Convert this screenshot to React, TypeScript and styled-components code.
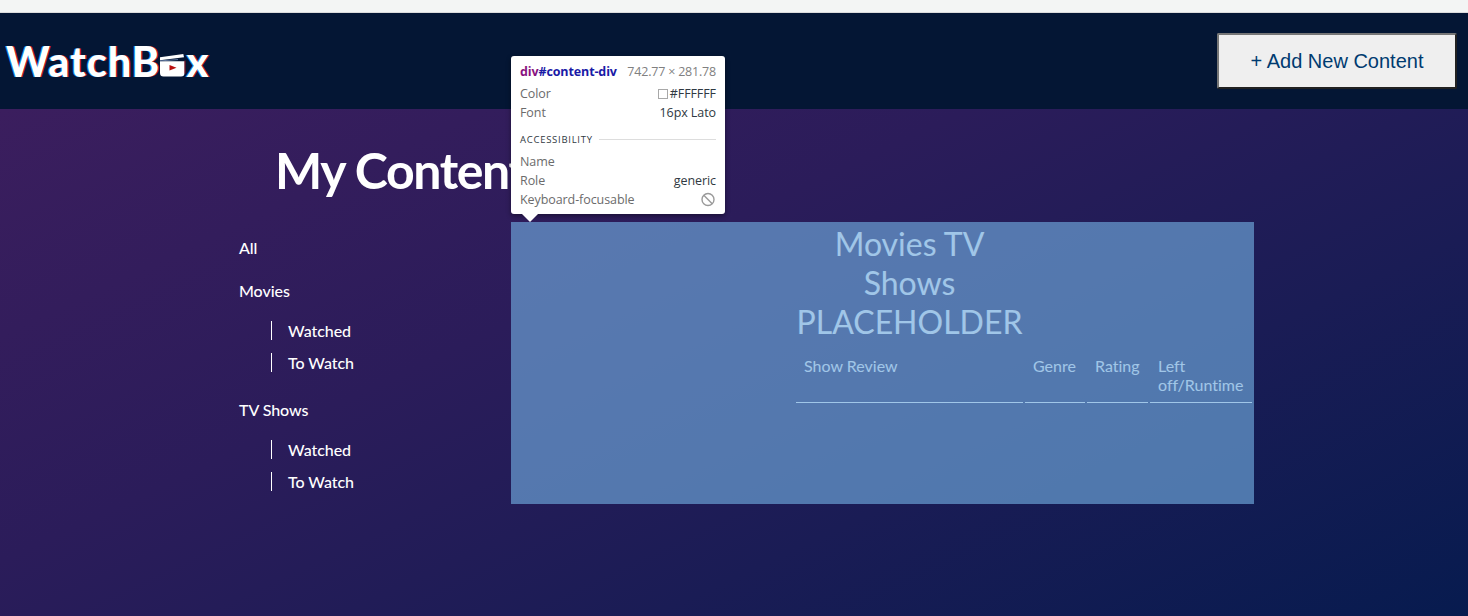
import React from 'react';
import styled, { createGlobalStyle } from 'styled-components';

const GlobalStyle = createGlobalStyle`
  * { box-sizing: border-box; }
  body { margin: 0; overflow: hidden; font-family: Lato, sans-serif; font-size: 16px; color: #fff; font-variant-ligatures: none; }
`;

const Page = styled.div`
  display: flex;
  flex-direction: column;
  height: 616px;
`;

const BrowserEdge = styled.div`
  flex: none;
  height: 13px;
  background: #f3f5f4;
  border-bottom: 1px solid #dcdcdc;
`;

const Header = styled.header`
  flex: none;
  display: flex;
  align-items: center;
  justify-content: space-between;
  height: 96px;
  padding: 0 11px 0 6px;
  background: #041634;
`;

const Logo = styled.div`
  display: flex;
  align-items: baseline;
  font: 900 41.5px/56px Lato, sans-serif;
  text-shadow: -1px 0 #168be0, 1px 0 #c4121c;
`;

const LogoText = styled.span<{ $spacing?: number }>`
  letter-spacing: ${(p) => p.$spacing ?? 0}px;
`;

const Clapper = styled.svg`
  width: 27px;
  height: 25px;
  margin: 0 0 -1px -1px;
`;

const AddButton = styled.button`
  width: 240px;
  height: 56px;
  margin-top: -1px;
  padding: 2px 0 0;
  border: 2px solid;
  border-color: #767676 #212121 #212121 #767676;
  border-radius: 2px;
  background: #efefef;
  color: #003b70;
  font: 20px 'Liberation Sans', Arial, sans-serif;
`;

const Main = styled.main`
  flex: 1;
  padding-left: 239px;
  background: linear-gradient(155deg, #3b1e5e 0%, #2b1c5a 38%, #1a1c55 68%, #071b4f 100%);
`;

const Title = styled.h1`
  margin: 0;
  height: 113px;
  padding: 31px 0 0 36px;
  font-size: 50px;
  line-height: 60px;
  font-weight: 700;
  letter-spacing: -1.4px;
`;

const Columns = styled.div`
  display: flex;
`;

const Sidebar = styled.nav`
  width: 272px;
  padding-top: 16px;
`;

const NavItem = styled.div<{ $gap?: number }>`
  height: 19px;
  line-height: 19px;
  font-weight: 500;
  letter-spacing: -0.06px;
  margin-bottom: ${(p) => p.$gap ?? 0}px;
`;

const SubItem = styled(NavItem)`
  margin-left: 32px;
  padding-left: 16px;
  border-left: 1px solid #fff;
`;

const ContentBox = styled.section`
  position: relative;
  width: 743px;
  height: 282px;
  padding-left: 283px;
`;

const Highlight = styled.div`
  position: absolute;
  inset: 0;
  background: rgba(111, 168, 220, 0.66);
`;

const ReviewTable = styled.table`
  width: 460px;
  table-layout: fixed;
  border-spacing: 2px;
  line-height: 19px;

  caption {
    width: 227px;
    margin-left: 2px;
    padding: 2px 0 3px;
    font-size: 32px;
    line-height: 39px;
  }

  th {
    height: 57px;
    padding: 10px 8px 7px;
    border-bottom: 1px solid #fff;
    text-align: left;
    vertical-align: top;
    font-weight: 400;
  }
`;

const Tooltip = styled.aside`
  position: absolute;
  left: 0;
  top: -166px;
  width: 214px;
  height: 158px;
  padding: 6px 9px 0;
  border-radius: 3px;
  background: #fff;
  box-shadow: 0 2px 5px rgba(0, 0, 0, 0.4);
  color: #303942;
  font: 12.5px/19px 'Open Sans', sans-serif;

  &::after {
    content: '';
    position: absolute;
    left: 11px;
    top: 158px;
    border: solid transparent;
    border-width: 8px 8px 0;
    border-top-color: #fff;
  }
`;

const TipRow = styled.div<{ $tall?: boolean }>`
  display: flex;
  align-items: center;
  justify-content: space-between;
  height: ${(p) => (p.$tall ? 22 : 19)}px;
  padding-bottom: ${(p) => (p.$tall ? 4 : 0)}px;
  white-space: nowrap;
`;

const TipText = styled.span<{ $color?: string; $spacing?: number; $bold?: boolean }>`
  display: inline-flex;
  align-items: center;
  color: ${(p) => p.$color ?? '#303942'};
  letter-spacing: ${(p) => p.$spacing ?? -0.08}px;
  font-weight: ${(p) => (p.$bold ? 700 : 400)};
`;

const Swatch = styled.i`
  width: 10px;
  height: 10px;
  margin-right: 2px;
  border: 1px solid #a8a8a8;
`;

const TipSection = styled.div`
  display: flex;
  align-items: center;
  gap: 6px;
  height: 30px;
  padding-top: 4px;
  font-size: 9.5px;
  letter-spacing: 0.73px;

  &::after {
    content: '';
    flex: 1;
    height: 1px;
    background: #ddd;
  }
`;

const gray = '#6b6b6b';

export default function App() {
  return (
    <Page>
      <GlobalStyle />
      <BrowserEdge />
      <Header>
        <Logo>
          <LogoText $spacing={1}>WatchB</LogoText>
          <Clapper viewBox="0 0 27 25">
            <path d="M1 5.3 24.3 2l.7 3.2L1 8.2Z" fill="#fff" />
            <path d="M1 9.2h24.5V21a3.5 3.5 0 0 1-3.5 3.5H4.5A3.5 3.5 0 0 1 1 21Z" fill="#fff" />
            <path d="m1 8.9 18-1.3" stroke="#8aa0cb" strokeWidth=".7" />
            <path d="M26 8.5v13" stroke="#c4121c" strokeWidth=".8" />
            <path d="m10.5 13 7 2.7-7 2.7Z" fill="#b80e0e" />
          </Clapper>
          <LogoText>x</LogoText>
        </Logo>
        <AddButton>+ Add New Content</AddButton>
      </Header>
      <Main>
        <Title>My Content</Title>
        <Columns>
          <Sidebar>
            <NavItem $gap={24}>All</NavItem>
            <NavItem $gap={21}>Movies</NavItem>
            <SubItem $gap={13}>Watched</SubItem>
            <SubItem $gap={28}>To Watch</SubItem>
            <NavItem $gap={21}>TV Shows</NavItem>
            <SubItem $gap={13}>Watched</SubItem>
            <SubItem>To Watch</SubItem>
          </Sidebar>
          <ContentBox>
            <ReviewTable>
              <caption>Movies TV Shows PLACEHOLDER</caption>
              <colgroup>
                <col style={{ width: 227 }} />
                <col style={{ width: 60 }} />
                <col style={{ width: 61 }} />
                <col style={{ width: 102 }} />
              </colgroup>
              <thead>
                <tr>
                  <th>Show Review</th>
                  <th>Genre</th>
                  <th>Rating</th>
                  <th>Left off/Runtime</th>
                </tr>
              </thead>
            </ReviewTable>
            <Highlight />
            <Tooltip>
              <TipRow $tall>
                <TipText $bold $color="#1a1aa6" $spacing={-0.12}>
                  <TipText $bold $color="#881280" $spacing={-0.12}>div</TipText>#content-div
                </TipText>
                <TipText $color="#808080" $spacing={-0.2}>742.77 × 281.78</TipText>
              </TipRow>
              <TipRow>
                <TipText $color={gray}>Color</TipText>
                <TipText><Swatch />#FFFFFF</TipText>
              </TipRow>
              <TipRow>
                <TipText $color={gray}>Font</TipText>
                <TipText>16px Lato</TipText>
              </TipRow>
              <TipSection>ACCESSIBILITY</TipSection>
              <TipRow><TipText $color={gray}>Name</TipText></TipRow>
              <TipRow>
                <TipText $color={gray}>Role</TipText>
                <TipText>generic</TipText>
              </TipRow>
              <TipRow>
                <TipText $color={gray}>Keyboard-focusable</TipText>
                <svg width="16" height="16" viewBox="0 0 16 16" fill="none" stroke="#9a9a9a" strokeWidth="1.4">
                  <circle cx="8" cy="7.5" r="6" />
                  <path d="m3.8 3.3 8.4 8.4" />
                </svg>
              </TipRow>
            </Tooltip>
          </ContentBox>
        </Columns>
      </Main>
    </Page>
  );
}
